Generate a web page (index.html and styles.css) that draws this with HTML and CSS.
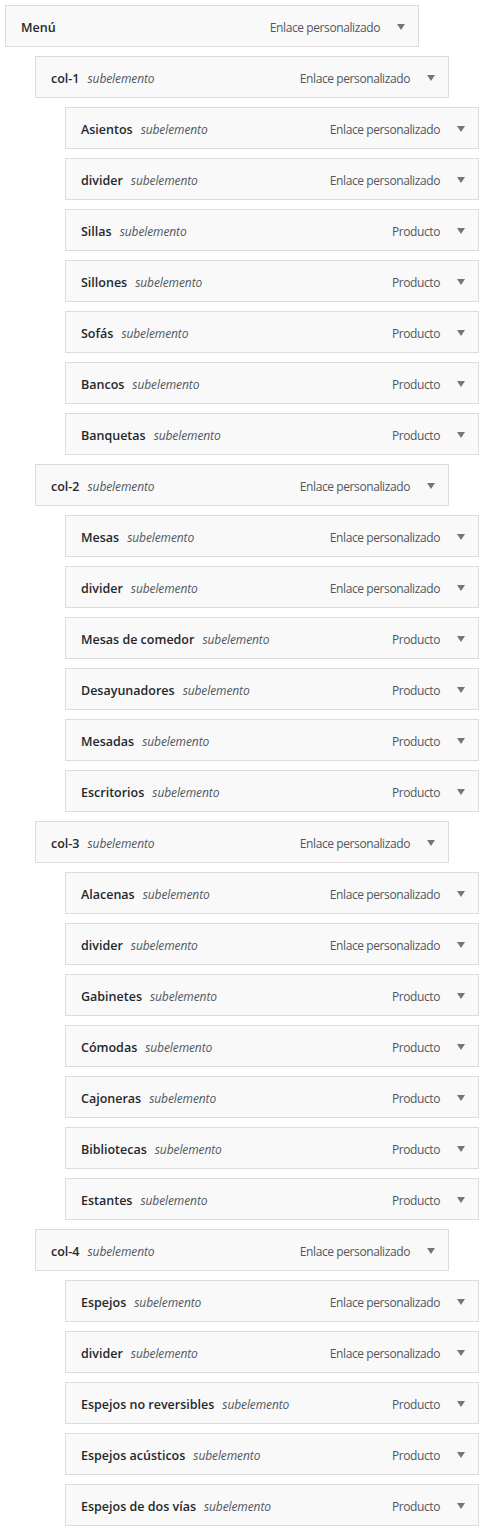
FILE: index.html
```html
<!DOCTYPE html>
<html lang="es">
<head>
<meta charset="utf-8">
<title>Menú</title>
<link rel="stylesheet" href="styles.css">
</head>
<body>
<ul class="menu">
  <li class="item depth-0"><span class="title"><span class="name">Menú</span></span><span class="controls"><span class="type">Enlace personalizado</span><span class="arrow"></span></span></li>

  <li class="item depth-1"><span class="title"><span class="name">col-1</span><span class="sub">subelemento</span></span><span class="controls"><span class="type">Enlace personalizado</span><span class="arrow"></span></span></li>
  <li class="item depth-2"><span class="title"><span class="name">Asientos</span><span class="sub">subelemento</span></span><span class="controls"><span class="type">Enlace personalizado</span><span class="arrow"></span></span></li>
  <li class="item depth-2"><span class="title"><span class="name">divider</span><span class="sub">subelemento</span></span><span class="controls"><span class="type">Enlace personalizado</span><span class="arrow"></span></span></li>
  <li class="item depth-2"><span class="title"><span class="name">Sillas</span><span class="sub">subelemento</span></span><span class="controls"><span class="type">Producto</span><span class="arrow"></span></span></li>
  <li class="item depth-2"><span class="title"><span class="name">Sillones</span><span class="sub">subelemento</span></span><span class="controls"><span class="type">Producto</span><span class="arrow"></span></span></li>
  <li class="item depth-2"><span class="title"><span class="name">Sofás</span><span class="sub">subelemento</span></span><span class="controls"><span class="type">Producto</span><span class="arrow"></span></span></li>
  <li class="item depth-2"><span class="title"><span class="name">Bancos</span><span class="sub">subelemento</span></span><span class="controls"><span class="type">Producto</span><span class="arrow"></span></span></li>
  <li class="item depth-2"><span class="title"><span class="name">Banquetas</span><span class="sub">subelemento</span></span><span class="controls"><span class="type">Producto</span><span class="arrow"></span></span></li>

  <li class="item depth-1"><span class="title"><span class="name">col-2</span><span class="sub">subelemento</span></span><span class="controls"><span class="type">Enlace personalizado</span><span class="arrow"></span></span></li>
  <li class="item depth-2"><span class="title"><span class="name">Mesas</span><span class="sub">subelemento</span></span><span class="controls"><span class="type">Enlace personalizado</span><span class="arrow"></span></span></li>
  <li class="item depth-2"><span class="title"><span class="name">divider</span><span class="sub">subelemento</span></span><span class="controls"><span class="type">Enlace personalizado</span><span class="arrow"></span></span></li>
  <li class="item depth-2"><span class="title"><span class="name">Mesas de comedor</span><span class="sub">subelemento</span></span><span class="controls"><span class="type">Producto</span><span class="arrow"></span></span></li>
  <li class="item depth-2"><span class="title"><span class="name">Desayunadores</span><span class="sub">subelemento</span></span><span class="controls"><span class="type">Producto</span><span class="arrow"></span></span></li>
  <li class="item depth-2"><span class="title"><span class="name">Mesadas</span><span class="sub">subelemento</span></span><span class="controls"><span class="type">Producto</span><span class="arrow"></span></span></li>
  <li class="item depth-2"><span class="title"><span class="name">Escritorios</span><span class="sub">subelemento</span></span><span class="controls"><span class="type">Producto</span><span class="arrow"></span></span></li>

  <li class="item depth-1"><span class="title"><span class="name">col-3</span><span class="sub">subelemento</span></span><span class="controls"><span class="type">Enlace personalizado</span><span class="arrow"></span></span></li>
  <li class="item depth-2"><span class="title"><span class="name">Alacenas</span><span class="sub">subelemento</span></span><span class="controls"><span class="type">Enlace personalizado</span><span class="arrow"></span></span></li>
  <li class="item depth-2"><span class="title"><span class="name">divider</span><span class="sub">subelemento</span></span><span class="controls"><span class="type">Enlace personalizado</span><span class="arrow"></span></span></li>
  <li class="item depth-2"><span class="title"><span class="name">Gabinetes</span><span class="sub">subelemento</span></span><span class="controls"><span class="type">Producto</span><span class="arrow"></span></span></li>
  <li class="item depth-2"><span class="title"><span class="name">Cómodas</span><span class="sub">subelemento</span></span><span class="controls"><span class="type">Producto</span><span class="arrow"></span></span></li>
  <li class="item depth-2"><span class="title"><span class="name">Cajoneras</span><span class="sub">subelemento</span></span><span class="controls"><span class="type">Producto</span><span class="arrow"></span></span></li>
  <li class="item depth-2"><span class="title"><span class="name">Bibliotecas</span><span class="sub">subelemento</span></span><span class="controls"><span class="type">Producto</span><span class="arrow"></span></span></li>
  <li class="item depth-2"><span class="title"><span class="name">Estantes</span><span class="sub">subelemento</span></span><span class="controls"><span class="type">Producto</span><span class="arrow"></span></span></li>

  <li class="item depth-1"><span class="title"><span class="name">col-4</span><span class="sub">subelemento</span></span><span class="controls"><span class="type">Enlace personalizado</span><span class="arrow"></span></span></li>
  <li class="item depth-2"><span class="title"><span class="name">Espejos</span><span class="sub">subelemento</span></span><span class="controls"><span class="type">Enlace personalizado</span><span class="arrow"></span></span></li>
  <li class="item depth-2"><span class="title"><span class="name">divider</span><span class="sub">subelemento</span></span><span class="controls"><span class="type">Enlace personalizado</span><span class="arrow"></span></span></li>
  <li class="item depth-2"><span class="title"><span class="name">Espejos no reversibles</span><span class="sub">subelemento</span></span><span class="controls"><span class="type">Producto</span><span class="arrow"></span></span></li>
  <li class="item depth-2"><span class="title"><span class="name">Espejos acústicos</span><span class="sub">subelemento</span></span><span class="controls"><span class="type">Producto</span><span class="arrow"></span></span></li>
  <li class="item depth-2"><span class="title"><span class="name">Espejos de dos vías</span><span class="sub">subelemento</span></span><span class="controls"><span class="type">Producto</span><span class="arrow"></span></span></li>
</ul>
</body>
</html>
```
FILE: styles.css
```css
html, body {
  margin: 0;
  padding: 0;
  background: #ffffff;
}
body {
  padding: 5px 0 0 5px;
  font-family: "Open Sans", "Noto Sans", sans-serif;
  font-size: 12px;
  color: #1d2327;
}
.menu {
  list-style: none;
  margin: 0;
  padding: 0;
}
.item {
  box-sizing: border-box;
  width: 414px;
  height: 42px;
  margin-bottom: 9px;
  padding: 2px 13px 0 15px;
  border: 1px solid #dcdcde;
  background: #f9f9f9;
  display: flex;
  align-items: center;
  justify-content: space-between;
}
.depth-1 { margin-left: 30px; }
.depth-2 { margin-left: 60px; }
.title {
  display: flex;
  align-items: baseline;
  gap: 8px;
}
.name {
  font-weight: 600;
  font-size: 12.5px;
  color: #23282d;
}
.sub {
  font-style: italic;
  color: #50575e;
  font-size: 12px;
  letter-spacing: -0.1px;
}
.controls {
  display: flex;
  align-items: center;
  gap: 17px;
}
.type {
  color: #50575e;
  font-size: 12px;
  letter-spacing: -0.4px;
}
.arrow {
  width: 0;
  height: 0;
  border-left: 4px solid transparent;
  border-right: 4px solid transparent;
  border-top: 6px solid #72777c;
  margin-top: -1px;
}
```
